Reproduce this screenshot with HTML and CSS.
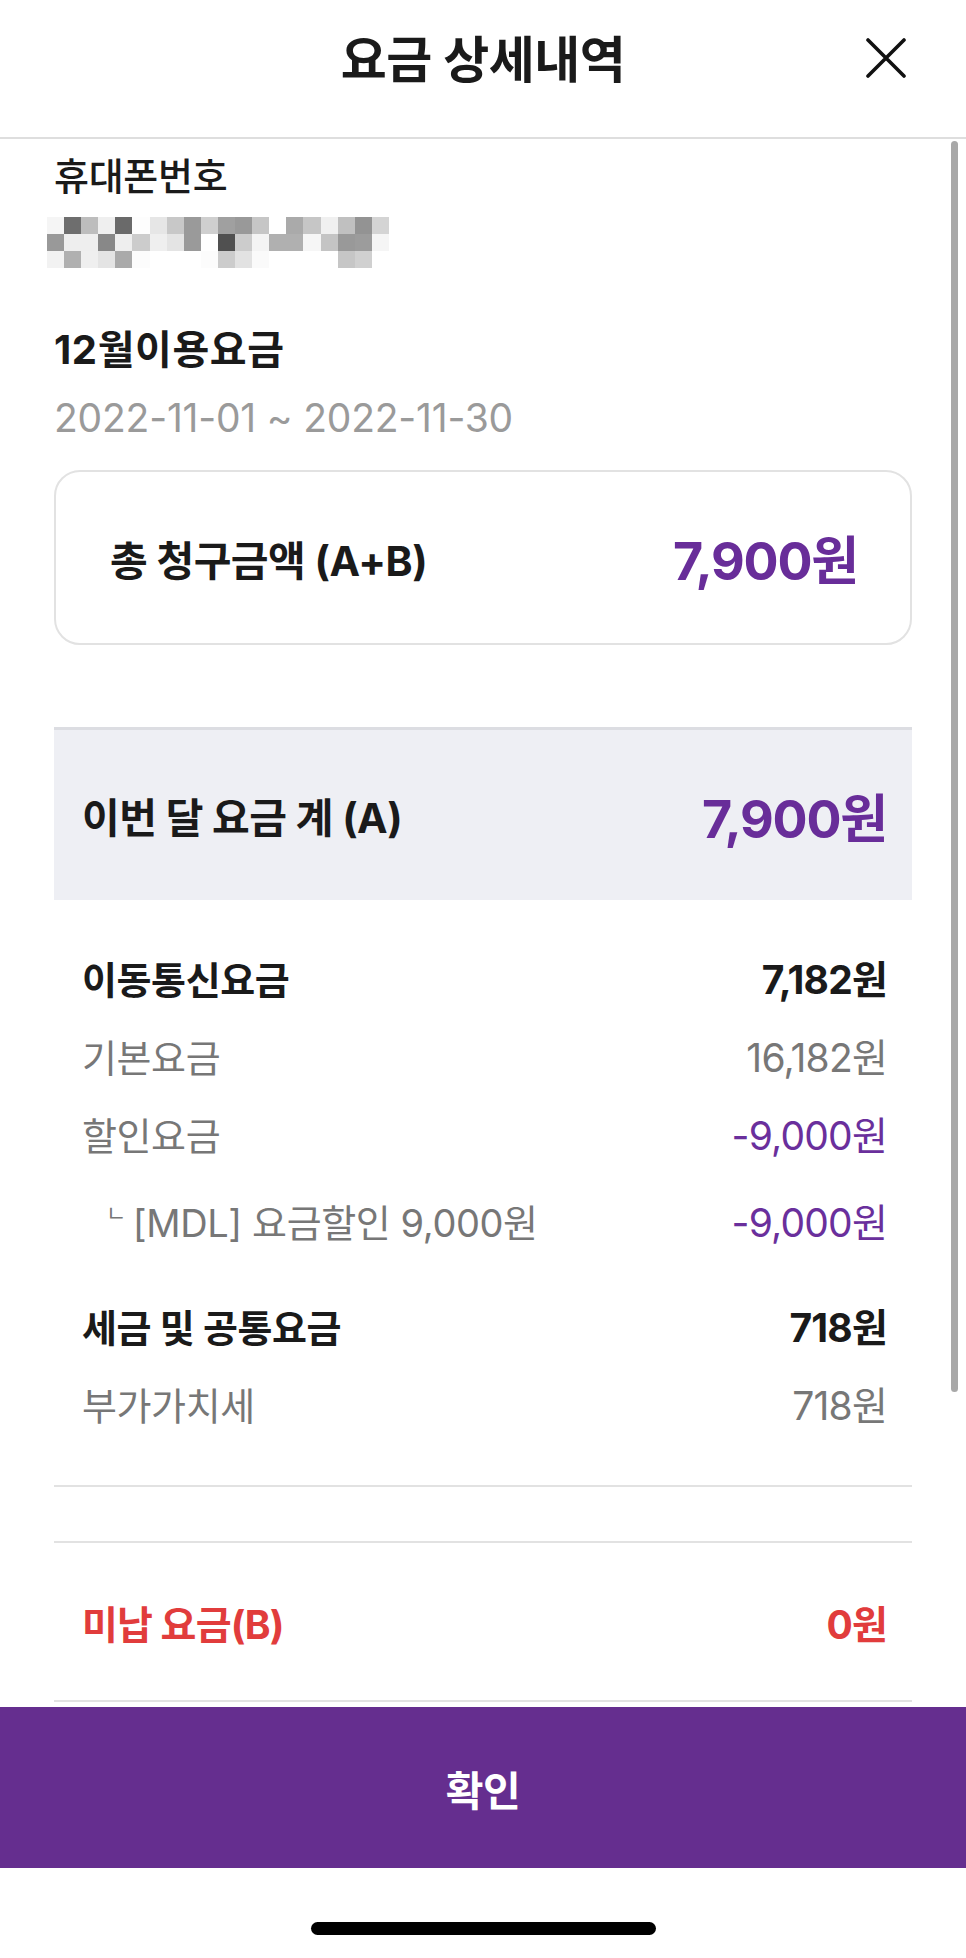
FILE: index.html
```html
<!DOCTYPE html>
<html lang="ko">
<head>
<meta charset="utf-8">
<title>요금 상세내역</title>
<link rel="stylesheet" href="styles.css">
</head>
<body>
<div class="screen">
  <header class="header">
    <h1 class="title">요금 상세내역</h1>
    <button class="close" aria-label="닫기">
      <svg width="40" height="40" viewBox="0 0 40 40"><path d="M2 2 L38 38 M38 2 L2 38" stroke="#111" stroke-width="3.6" stroke-linecap="round" fill="none"/></svg>
    </button>
  </header>

  <main class="content">
    <div class="label-phone">휴대폰번호</div>
    <div class="mosaic" id="mosaic"></div>

    <div class="month">12월이용요금</div>
    <div class="period">2022-11-01 ~ 2022-11-30</div>

    <div class="total-card">
      <span class="total-label">총 청구금액 (A+B)</span>
      <span class="total-value">7,900원</span>
    </div>

    <div class="month-band">
      <span class="band-label">이번 달 요금 계 (A)</span>
      <span class="band-value">7,900원</span>
    </div>

    <div class="rows">
      <div class="row row-head"><span>이동통신요금</span><span class="num">7,182원</span></div>
      <div class="row row-sub"><span>기본요금</span><span class="num">16,182원</span></div>
      <div class="row row-sub"><span>할인요금</span><span class="num purple">-9,000원</span></div>
      <div class="row row-sub row-detail"><span><i class="corner">ㄴ</i>[MDL] 요금할인 9,000원</span><span class="num purple">-9,000원</span></div>
      <div class="row row-head row-group"><span>세금 및 공통요금</span><span class="num">718원</span></div>
      <div class="row row-sub"><span>부가가치세</span><span class="num">718원</span></div>
    </div>

    <div class="divider-block"></div>

    <div class="unpaid"><span>미납 요금(B)</span><span class="num">0원</span></div>
    <div class="bottom-line"></div>
  </main>

  <div class="confirm">확인</div>
  <div class="home-area"><div class="home-indicator"></div></div>

  <div class="scrollbar"></div>
</div>
<script>
(function(){
  var rows = [
    ["f5f5f5","6e6e6e","bdbdbd","efefef","6a6a6a","fdfdfd","e6e6e6","c8c8c8","9a9a9a","cfcfcf","a0a0a0","999999","c6c6c6","ffffff","aaaaaa","c6c6c6","f0f0f0","c0c0c0","939393","d4d4d4"],
    ["999999","eeeeee","eeeeee","888888","eeeeee","cccccc","efefef","e4e4e4","9a9a9a","ffffff","505050","cccccc","f4f4f4","b0b0b0","b0b0b0","f6f6f6","c4c4c4","999999","9c9c9c","f5f5f5"],
    ["f2f2f2","b0b0b0","efefef","e4e4e4","aaaaaa","fcfcfc","ffffff","ffffff","ffffff","fcfcfc","cccccc","e2e2e2","fafafa","ffffff","ffffff","ffffff","ffffff","c6c6c6","d0d0d0","ffffff"]
  ];
  var m = document.getElementById("mosaic");
  rows.forEach(function(r){
    r.forEach(function(c){
      var d = document.createElement("span");
      d.className = "px";
      d.style.background = "#" + c;
      m.appendChild(d);
    });
  });
})();
</script>
</body>
</html>
```

FILE: styles.css
```css
* { box-sizing: border-box; margin: 0; padding: 0; }

html, body {
  width: 966px;
  height: 1958px;
  background: #fff;
}

body {
  font-family: Inter, "Noto Sans CJK KR", "Noto Sans", sans-serif;
  color: #111;
  overflow: hidden;
}

.screen {
  position: relative;
  width: 966px;
  height: 1958px;
  display: flex;
  flex-direction: column;
}

.header {
  position: relative;
  height: 139px;
  border-bottom: 2px solid #dedede;
  display: flex;
  justify-content: center;
}

.title {
  font-size: 50px;
  font-weight: 700;
  line-height: 120px;
  letter-spacing: -0.5px;
  color: #1a1a1a;
}

.close {
  position: absolute;
  left: 866px;
  top: 38px;
  width: 40px;
  height: 40px;
  border: 0;
  background: none;
  display: block;
}
.close svg { display: block; }

.content {
  padding: 12px 54px 0;
  display: flex;
  flex-direction: column;
}

.label-phone {
  font-size: 38px;
  font-weight: 500;
  line-height: 50px;
  letter-spacing: -0.3px;
  color: #1a1a1a;
}

.mosaic {
  margin-top: 16px;
  margin-left: -7px;
  width: 342px;
  display: grid;
  grid-template-columns: repeat(20, 17.1px);
  grid-auto-rows: 17px;
  filter: blur(0.6px);
}
.px { display: block; }

.month {
  margin-top: 57px;
  font-size: 40px;
  font-weight: 700;
  line-height: 50px;
  letter-spacing: 0.6px;
  color: #1a1a1a;
}

.period {
  margin-top: 18px;
  font-size: 39px;
  font-weight: 400;
  line-height: 50px;
  color: #9a9a9a;
  letter-spacing: -0.2px;
}

.total-card {
  margin-top: 27px;
  height: 175px;
  border: 2px solid #e2e2e2;
  border-radius: 26px;
  padding: 0 52px 0 54px;
  display: flex;
  align-items: center;
  justify-content: space-between;
}

.total-label {
  font-size: 41px;
  font-weight: 700;
  letter-spacing: -0.5px;
  color: #1a1a1a;
}

.total-value, .band-value {
  font-size: 52px;
  font-weight: 700;
  color: #682d99;
  letter-spacing: -1.2px;
}

.month-band {
  margin-top: 82px;
  height: 173px;
  border-top: 3px solid #dcdde2;
  background: #eeeff4;
  padding: 0 25px 0 28px;
  display: flex;
  align-items: center;
  justify-content: space-between;
}

.band-label {
  font-size: 41px;
  font-weight: 700;
  letter-spacing: -0.5px;
  color: #1a1a1a;
}

.rows {
  margin-top: 55px;
  padding: 0 25px 0 28px;
  display: flex;
  flex-direction: column;
}

.row {
  display: flex;
  justify-content: space-between;
  align-items: center;
  font-size: 38px;
  line-height: 50px;
  letter-spacing: -0.4px;
}

.row .num { font-size: 39px; letter-spacing: -0.8px; }

.row + .row { margin-top: 28px; }

.row-head { font-weight: 700; color: #1a1a1a; }
.row-sub { font-weight: 400; color: #777; }
.row + .row-detail { margin-top: 37px; }
.row + .row-group { margin-top: 55px; }

.corner {
  font-style: normal;
  font-size: 22px;
  display: inline-block;
  vertical-align: top;
  line-height: 30px;
  margin: 0 7px 0 24px;
  color: #777;
}

.purple { color: #6a2f9c; }

.divider-block {
  margin-top: 54px;
  height: 58px;
  border-top: 2px solid #e2e2e2;
  border-bottom: 2px solid #e2e2e2;
}

.unpaid {
  margin-top: 57px;
  padding: 0 25px 0 28px;
  display: flex;
  justify-content: space-between;
  align-items: center;
  font-size: 39px;
  line-height: 50px;
  font-weight: 700;
  color: #e13c3c;
  letter-spacing: -0.8px;
}

.bottom-line {
  margin-top: 50px;
  height: 2px;
  background: #e2e2e2;
}

.confirm {
  margin-top: 5px;
  height: 161px;
  background: #652e8f;
  color: #fff;
  font-size: 41px;
  font-weight: 700;
  display: flex;
  align-items: center;
  justify-content: center;
  letter-spacing: -0.5px;
}

.home-area {
  flex: 1;
  display: flex;
  justify-content: center;
  padding-top: 54px;
}

.home-indicator {
  width: 345px;
  height: 13px;
  border-radius: 7px;
  background: #000;
}

.scrollbar {
  position: absolute;
  left: 951px;
  top: 141px;
  width: 7px;
  height: 1251px;
  border-radius: 4px;
  background: #a8a8a8;
}
```
